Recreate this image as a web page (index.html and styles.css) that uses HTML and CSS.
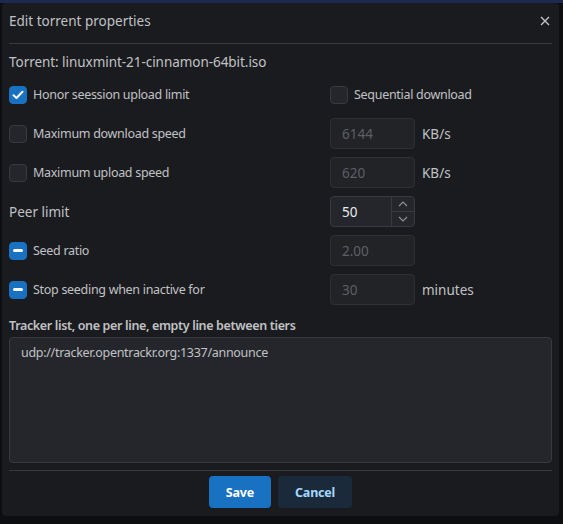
FILE: index.html
```html
<!DOCTYPE html>
<html>
<head>
<meta charset="utf-8">
<link rel="stylesheet" href="styles.css">
</head>
<body>
<div class="strip"></div>
<div class="dialog">
  <header class="head">
    <h2 class="title">Edit torrent properties</h2>
    <button class="close" aria-label="Close">
      <svg width="10" height="10" viewBox="0 0 10 10"><path d="M1 1L9 9M9 1L1 9" stroke="#c1c2c5" stroke-width="1.4" fill="none"/></svg>
    </button>
  </header>
  <div class="divider"></div>
  <div class="body">
    <div class="torrent">Torrent: linuxmint-21-cinnamon-64bit.iso</div>
    <div class="grid">
      <label class="check"><span class="box on"><svg width="12" height="10" viewBox="0 0 12 10"><path d="M1.5 5.2L4.5 8L10.5 1.8" stroke="#fff" stroke-width="2" fill="none" stroke-linecap="round" stroke-linejoin="round"/></svg></span>Honor seession upload limit</label>
      <label class="check wide"><span class="box"></span>Sequential download</label>

      <label class="check"><span class="box"></span>Maximum download speed</label>
      <div class="input disabled">6144</div>
      <span class="unit">KB/s</span>

      <label class="check"><span class="box"></span>Maximum upload speed</label>
      <div class="input disabled">620</div>
      <span class="unit">KB/s</span>

      <span class="plain">Peer limit</span>
      <div class="input number"><span class="val">50</span>
        <span class="controls">
          <span class="ctl"><svg width="10" height="6" viewBox="0 0 10 6"><path d="M1 5L5 1L9 5" stroke="#909296" stroke-width="1.1" fill="none"/></svg></span>
          <span class="ctl lower"><svg width="10" height="6" viewBox="0 0 10 6"><path d="M1 1L5 5L9 1" stroke="#909296" stroke-width="1.1" fill="none"/></svg></span>
        </span>
      </div>
      <span></span>

      <label class="check"><span class="box on"><span class="dash"></span></span>Seed ratio</label>
      <div class="input disabled">2.00</div>
      <span></span>

      <label class="check"><span class="box on"><span class="dash"></span></span>Stop seeding when inactive for</label>
      <div class="input disabled">30</div>
      <span class="unit">minutes</span>
    </div>
    <div class="tracker-label">Tracker list, one per line, empty line between tiers</div>
    <div class="textarea">udp://tracker.opentrackr.org:1337/announce</div>
  </div>
  <div class="divider bottom"></div>
  <div class="actions">
    <button class="btn save">Save</button>
    <button class="btn cancel">Cancel</button>
  </div>
</div>
</body>
</html>
```
FILE: styles.css
```css
html, body {
  margin: 0;
  padding: 0;
}
body {
  width: 563px;
  height: 524px;
  background: #0d0e10;
  font-family: "Noto Sans", "Open Sans", sans-serif;
  font-size: 13.5px;
  color: #c1c2c5;
  overflow: hidden;
}
.strip {
  height: 3px;
  background: #1b2a4d;
}
.dialog {
  margin-left: 2px;
  width: 557px;
  height: 513px;
  box-sizing: border-box;
  background: #1a1b1e;
  border-radius: 4px;
  padding: 0 7px 8px;
  display: flex;
  flex-direction: column;
}
.head {
  height: 36px;
  flex: none;
  display: flex;
  align-items: center;
  justify-content: space-between;
}
.title {
  margin: 0;
  font-size: 13.5px;
  font-weight: 400;
  color: #c1c2c5;
}
.close {
  width: 22px;
  height: 22px;
  border: 0;
  background: transparent;
  padding: 0;
  display: flex;
  align-items: center;
  justify-content: center;
  margin-right: -4px;
}
.divider {
  height: 1px;
  flex: none;
  background: #373a40;
  margin-top: 4px;
}
.divider.bottom {
  margin-top: 7px;
}
.body {
  padding-top: 8px;
  flex: none;
}
.torrent {
  line-height: 20px;
  letter-spacing: -0.05px;
}
.grid {
  margin-top: 7px;
  display: grid;
  grid-template-columns: 321px 85px 1fr;
  grid-auto-rows: 31px;
  row-gap: 8px;
  align-items: center;
}
.check {
  display: flex;
  align-items: center;
  gap: 6px;
  font-size: 12.5px;
  letter-spacing: -0.3px;
}
.wide {
  grid-column: 2 / span 2;
}
.box {
  width: 18px;
  height: 18px;
  box-sizing: border-box;
  border-radius: 4px;
  background: #25262b;
  border: 1px solid #373a40;
  display: flex;
  align-items: center;
  justify-content: center;
  flex: none;
}
.box.on {
  background: #1971c2;
  border-color: #1971c2;
}
.dash {
  width: 10px;
  height: 3px;
  border-radius: 2px;
  background: #fff;
}
.input {
  height: 31px;
  box-sizing: border-box;
  border: 1px solid #373a40;
  border-radius: 4px;
  background: #25262b;
  padding-left: 11px;
  display: flex;
  align-items: center;
  color: #c1c2c5;
}
.input.disabled {
  background: #222327;
  border-color: #2e3035;
  color: #5c5f66;
}
.input.number {
  padding-left: 0;
  padding-right: 0;
}
.val {
  flex: 1;
  padding-left: 11px;
  color: #e9ecef;
}
.controls {
  width: 22px;
  align-self: stretch;
  display: flex;
  flex-direction: column;
  border-left: 1px solid #373a40;
}
.ctl {
  flex: 1;
  display: flex;
  align-items: center;
  justify-content: center;
}
.ctl.lower {
  border-top: 1px solid #373a40;
}
.unit {
  margin-left: 7px;
}
.tracker-label {
  margin-top: 11px;
  line-height: 20px;
  font-size: 12.5px;
  font-weight: 600;
  letter-spacing: -0.35px;
}
.textarea {
  margin-top: 1px;
  height: 126px;
  box-sizing: border-box;
  background: #25262b;
  border: 1px solid #373a40;
  border-radius: 4px;
  padding: 5px 11px;
  line-height: 20px;
  font-size: 12.5px;
  letter-spacing: -0.3px;
}
.actions {
  padding-top: 5px;
  flex: none;
  display: flex;
  justify-content: center;
  gap: 7px;
}
.btn {
  height: 32px;
  border: 0;
  border-radius: 4px;
  font-family: inherit;
  font-size: 12.5px;
  font-weight: 700;
  letter-spacing: -0.2px;
  padding: 0 17px;
}
.save {
  background: #1971c2;
  color: #fff;
}
.cancel {
  background: #1b2a3b;
  color: #a5d8ff;
}
```
